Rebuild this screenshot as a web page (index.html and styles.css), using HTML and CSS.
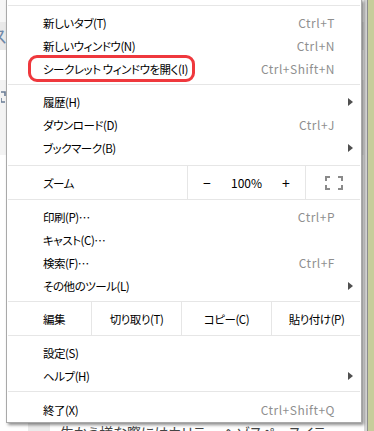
FILE: index.html
```html
<!DOCTYPE html>
<html lang="ja">
  <head>
    <meta charset="UTF-8" />
    <meta name="viewport" content="width=device-width, initial-scale=1.0" />
    <title>Chrome メニュー</title>
    <link rel="stylesheet" href="styles.css">
  </head>
  <body>
    <!-- page behind the menu -->
    <div class="page">
      <div class="content">
        <div class="band band-top"></div>
        <div class="band band-tab"><span class="peek">ス</span></div>
        <div class="band band-white"></div>
        <div class="band band-tool">
          <svg class="peek-icon" width="8" height="14" viewBox="0 0 8 14">
            <path d="M0 2h4v4" fill="none" stroke="#6b7d96" stroke-width="1.6" />
            <path d="M4 12H0V8" fill="none" stroke="#6b7d96" stroke-width="1.6" />
          </svg>
        </div>
        <div class="band band-rest"></div>
        <div class="bottom-line">
          <span class="bottom-box"></span>
          <span class="bottom-text">生かう様な際にはカリテー ヘゾスペースイテ</span>
        </div>
      </div>
      <div class="scrollbar"></div>
    </div>

    <!-- the menu -->
    <div class="menu">
      <div class="top-pad"></div>
      <div class="sep"></div>

      <div class="group">
        <div class="item"><span class="label">新しいタブ(T)</span><span class="key">Ctrl+T</span></div>
        <div class="item"><span class="label">新しいウィンドウ(N)</span><span class="key">Ctrl+N</span></div>
        <div class="item marked"><span class="label">シークレット ウィンドウを開く(I)</span><span class="key">Ctrl+Shift+N</span></div>
      </div>
      <div class="sep"></div>

      <div class="group group-2">
        <div class="item"><span class="label">履歴(H)</span><span class="arrow"></span></div>
        <div class="item"><span class="label">ダウンロード(D)</span><span class="key">Ctrl+J</span></div>
        <div class="item"><span class="label">ブックマーク(B)</span><span class="arrow"></span></div>
      </div>
      <div class="sep"></div>

      <div class="zoom-row">
        <span class="zoom-label">ズーム</span>
        <div class="zoom-ctrl">
          <span class="zoom-btn">−</span>
          <span class="zoom-val">100%</span>
          <span class="zoom-btn">+</span>
        </div>
        <div class="fullscreen">
          <svg width="18" height="14" viewBox="0 0 18 14">
            <path d="M1 5V1h4M13 1h4v4M17 9v4h-4M5 13H1V9" fill="none" stroke="#8a8a8a" stroke-width="2" />
          </svg>
        </div>
      </div>
      <div class="sep"></div>

      <div class="group">
        <div class="item"><span class="label">印刷(P)…</span><span class="key">Ctrl+P</span></div>
        <div class="item"><span class="label">キャスト(C)…</span></div>
        <div class="item"><span class="label">検索(F)…</span><span class="key">Ctrl+F</span></div>
        <div class="item"><span class="label">その他のツール(L)</span><span class="arrow"></span></div>
      </div>
      <div class="sep"></div>

      <div class="edit-row">
        <span class="edit-label">編集</span>
        <span class="edit-btn">切り取り(T)</span>
        <span class="edit-btn">コピー(C)</span>
        <span class="edit-btn">貼り付け(P)</span>
      </div>
      <div class="sep"></div>

      <div class="group group-6">
        <div class="item"><span class="label">設定(S)</span></div>
        <div class="item"><span class="label">ヘルプ(H)</span><span class="arrow"></span></div>
      </div>
      <div class="sep"></div>

      <div class="group group-last">
        <div class="item"><span class="label">終了(X)</span><span class="key">Ctrl+Shift+Q</span></div>
      </div>
    </div>
  </body>
</html>
```

FILE: styles.css
```css
body {
  margin: 0;
  width: 374px;
  height: 431px;
  overflow: hidden;
  background-color: #fff;
  font-family: "Noto Sans CJK JP", "Noto Sans", sans-serif;
  font-feature-settings: "palt";
}

/* page behind the menu */
.page {
  display: flex;
  height: 431px;
}

.content {
  flex: 1;
  display: flex;
  flex-direction: column;
  border-right: 3px solid #d6d6d6;
}

.band-top {
  height: 22px;
  background-color: #f6f6f6;
}

.band-tab {
  height: 28px;
  background-color: #e9e9e9;
  line-height: 28px;
}

.peek {
  display: inline-block;
  margin-left: -9px;
  font-size: 17px;
  color: #7088a8;
}

.band-white {
  height: 30px;
}

.band-tool {
  height: 75px;
  background-color: #f3f3f3;
  padding-top: 10px;
  box-sizing: border-box;
}

.peek-icon {
  display: block;
  margin-left: 1px;
}

.band-rest {
  flex: 1;
}

.bottom-line {
  display: flex;
  align-items: flex-start;
  height: 9px;
  padding-left: 28px;
  overflow: hidden;
}

.bottom-box {
  width: 22px;
  height: 9px;
  background-color: #ebebeb;
}

.bottom-text {
  margin-left: 10px;
  margin-top: 2px;
  font-size: 14px;
  line-height: 16px;
  color: #444;
  white-space: nowrap;
}

.scrollbar {
  width: 6px;
  border-left: 1px solid #8e8e8e;
  background-color: #c7cd9b;
}

/* menu popup */
.menu {
  position: absolute;
  left: 6px;
  top: -1px;
  width: 354px;
  background-color: #fff;
  border: 1px solid #a9a9a9;
  box-shadow: 2px 2px 3px rgba(0, 0, 0, 0.45);
  font-size: 11.5px;
  letter-spacing: -0.45px;
  color: #000;
}

.top-pad {
  height: 5px;
}

.sep {
  height: 1px;
  margin: 0 1px;
  background-color: #e6e6e6;
}

.group {
  padding: 5px 0 4px;
}

.group-2 {
  padding-bottom: 6px;
}

.group-6 {
  padding-bottom: 4px;
}

.group-last {
  padding: 6px 0 1px;
}

.item {
  position: relative;
  display: flex;
  align-items: center;
  height: 23px;
  padding: 0 8px 0 36px;
}

.label {
  flex: 1;
  white-space: nowrap;
}

.key {
  margin-right: 18px;
  font-size: 12px;
  letter-spacing: 0.5px;
  color: #8f8f8f;
}

.arrow {
  width: 0;
  height: 0;
  border-top: 4px solid transparent;
  border-bottom: 4px solid transparent;
  border-left: 5px solid #505050;
}

/* red annotation round the incognito row */
.marked::before {
  content: "";
  position: absolute;
  left: 21px;
  top: -2px;
  width: 167px;
  height: 27px;
  box-sizing: border-box;
  border: 3px solid #ef383d;
  border-radius: 9px;
}

.zoom-row {
  display: flex;
  height: 33px;
}

.zoom-label {
  flex: 1;
  display: flex;
  align-items: center;
  padding-left: 36px;
}

.zoom-ctrl {
  display: flex;
  width: 117px;
  border-left: 1px solid #e6e6e6;
}

.zoom-btn,
.zoom-val {
  display: flex;
  align-items: center;
  justify-content: center;
  letter-spacing: 0;
}

.zoom-btn {
  width: 38px;
  font-size: 14px;
}

.zoom-val {
  flex: 1;
  font-size: 12px;
}

.fullscreen {
  display: flex;
  align-items: center;
  justify-content: center;
  width: 55px;
  border-left: 1px solid #e6e6e6;
}

.edit-row {
  display: grid;
  grid-template-columns: 84px 1fr 1fr 1fr;
  height: 33px;
}

.edit-label {
  display: flex;
  align-items: center;
  padding-left: 36px;
}

.edit-btn {
  display: flex;
  align-items: center;
  justify-content: center;
  border-left: 1px solid #e6e6e6;
  white-space: nowrap;
}
```
